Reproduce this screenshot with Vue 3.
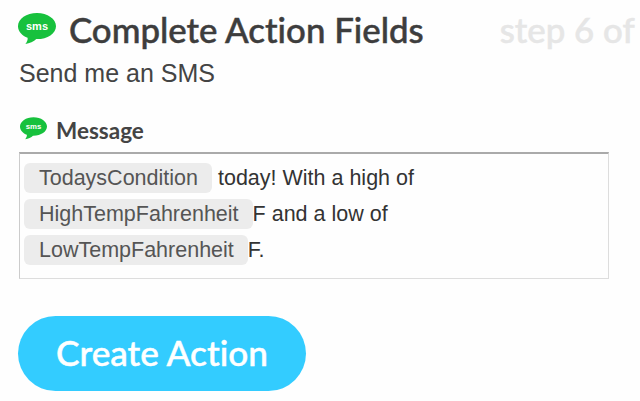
<script setup>
const lines = [
	{ pill: "TodaysCondition", gap: "wide", text: "today! With a high of" },
	{ pill: "HighTempFahrenheit", gap: "", text: "F and a low of" },
	{ pill: "LowTempFahrenheit", gap: "", text: "F." },
];
</script>

<template>
	<div class="page">
		<div class="title-row">
			<svg class="sms-icon" viewBox="0 0 38 32" width="38" height="32">
				<path
					d="M19 0C8.500 0 0 5.900 0 13.200c0 5.400 4.400 9.700 9.600 11.600.4 1.900-.6 4.200-2.200 6.200 4-.4 8.600-2.400 10.900-4.900h.7c10.500 0 19-5.700 19-12.900S29.500 0 19 0z"
					fill="#17c13d"
				/>
				<text x="19" y="17" class="sms-text" text-anchor="middle">sms</text>
			</svg>
			<h1 class="title">Complete Action Fields</h1>
			<span class="step">step 6 of</span>
		</div>
		<p class="subtitle">Send me an SMS</p>

		<div class="field-label">
			<svg class="sms-icon-small" viewBox="0 0 38 32" width="27" height="23">
				<path
					d="M19 0C8.500 0 0 5.900 0 13.200c0 5.400 4.400 9.700 9.600 11.600.4 1.900-.6 4.200-2.200 6.200 4-.4 8.600-2.400 10.900-4.900h.7c10.500 0 19-5.700 19-12.900S29.500 0 19 0z"
					fill="#17c13d"
				/>
				<text x="19" y="17" class="sms-text" text-anchor="middle">sms</text>
			</svg>
			<span>Message</span>
		</div>

		<div class="message-box">
			<div v-for="line in lines" :key="line.pill" class="message-line">
				<span class="pill" :class="line.gap">{{ line.pill }}</span>
				<span class="message-text">{{ line.text }}</span>
			</div>
		</div>

		<button type="button" class="create-btn">Create Action</button>
	</div>
</template>

<style scoped>
.page {
	width: 640px;
	height: 401px;
	box-sizing: border-box;
	overflow: hidden;
	padding: 10px 0 0 18px;
	background-color: #fefefe;
	color: #444;
}

.title-row {
	display: flex;
	align-items: center;
	height: 40px;
	white-space: nowrap;
	font-variant-ligatures: none;
}

.sms-icon {
	flex-shrink: 0;
	margin-top: -3px;
}

.sms-text {
	fill: #fff;
	font-family: "Liberation Sans", sans-serif;
	font-size: 11px;
	font-weight: 700;
}

.title {
	margin: -2px 0 0 13px;
	font-family: Lato, sans-serif;
	font-size: 34.800px;
	font-weight: 500;
	-webkit-text-stroke: 0.5px #3d3d3d;
	color: #3d3d3d;
}

.step {
	margin: -2px 0 0 76px;
	font-family: Lato, sans-serif;
	font-size: 34.800px;
	font-weight: 500;
	-webkit-text-stroke: 0.5px #e6e6e6;
	color: #e6e6e6;
}

.subtitle {
	margin: 8px 0 0 1px;
	font-family: "Liberation Sans", sans-serif;
	font-size: 25px;
	line-height: 30px;
	color: #444;
}

.field-label {
	display: flex;
	align-items: center;
	gap: 9px;
	margin: 29px 0 0 2px;
	height: 26px;
	font-family: Lato, sans-serif;
	font-size: 22.500px;
	font-weight: 700;
	color: #444;
}

.sms-icon-small {
	margin-top: -3px;
}

.message-box {
	width: 590px;
	height: 127px;
	box-sizing: border-box;
	margin: 9px 0 0 1px;
	padding: 9px 4px 0;
	border: 1px solid #ddd;
	border-top: 2px solid #aaa;
	border-left-color: #ccc;
	font-family: "Liberation Sans", sans-serif;
	font-size: 21.500px;
	color: #333;
}

.message-line {
	display: flex;
	align-items: center;
	height: 30px;
	margin-bottom: 6px;
	white-space: nowrap;
}

.pill {
	height: 30px;
	line-height: 31px;
	padding: 0 14px 0 15px;
	border-radius: 6px;
	background-color: #ececec;
	color: #555;
}

.pill.wide {
	margin-right: 6px;
}

.message-text {
	padding-top: 1px;
}

.create-btn {
	display: block;
	width: 288px;
	height: 75px;
	margin-top: 37px;
	padding-bottom: 5px;
	border: none;
	border-radius: 38px;
	background-color: #33ccff;
	color: #fff;
	font-family: Lato, sans-serif;
	font-size: 35.200px;
	font-weight: 500;
	-webkit-text-stroke: 0.5px #fff;
	font-variant-ligatures: none;
}
</style>
